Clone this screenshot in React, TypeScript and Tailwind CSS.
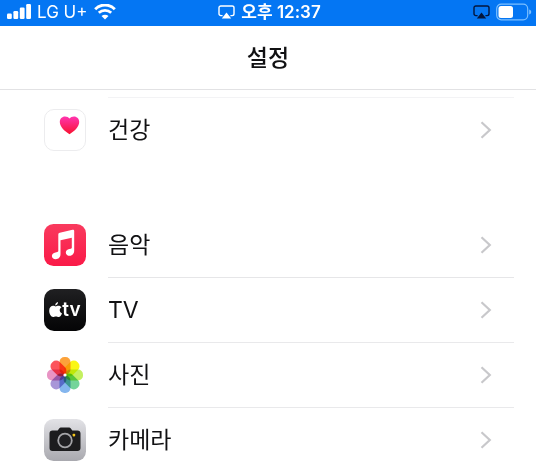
import type { ReactNode } from "react";

type Item = {
  label: string;
  icon: ReactNode;
  border: string;
};

const SignalIcon = () => (
  <svg className="h-4 w-6" viewBox="0 0 24 16" fill="#fff" aria-hidden="true">
    <rect x="0" y="9.5" width="4.8" height="5.5" rx="1.2" />
    <rect x="6.4" y="7" width="4.8" height="8" rx="1.2" />
    <rect x="12.8" y="3.5" width="4.8" height="11.5" rx="1.2" />
    <rect x="19.2" y="0" width="4.8" height="15" rx="1.2" />
  </svg>
);

const WifiIcon = () => (
  <svg className="h-4 w-[22px]" viewBox="0 0 22 16" fill="none" stroke="#fff" aria-hidden="true">
    <path d="M1.2 5.2C6.8-.3 15.2-.3 20.8 5.2" strokeWidth="3" />
    <path d="M4.8 8.8C8.4 5.5 13.6 5.5 17.2 8.8" strokeWidth="2.8" />
    <path d="M11 15.5 7.5 12c2-1.800 5-1.800 7 0Z" fill="#fff" stroke="none" />
  </svg>
);

const AirPlayIcon = ({ className }: { className: string }) => (
  <svg className={className} viewBox="0 0 17 14" fill="none" stroke="currentColor" aria-hidden="true">
    <path
      d="M4.6 10.6H2.8A1.8 1.8 0 0 1 1 8.8V2.8A1.8 1.8 0 0 1 2.8 1h11.4A1.8 1.8 0 0 1 16 2.8v6a1.8 1.8 0 0 1-1.8 1.8h-1.8"
      strokeWidth="1.4"
    />
    <path d="M8.5 7.5 13.2 13.4H3.8Z" fill="currentColor" stroke="none" />
  </svg>
);

const BatteryIcon = () => (
  <svg className="h-[18px] w-9" viewBox="0 0 36 18" aria-hidden="true">
    <rect x="0.7" y="1.2" width="31" height="15.6" rx="4.5" fill="none" stroke="#7cc0ff" strokeWidth="1.2" />
    <rect x="2.5" y="3" width="14.5" height="12" rx="2.5" fill="#fff" />
    <path d="M33.2 6.5c1.500.4 2 1.500 2 2.500s-.5 2.100-2 2.500Z" fill="#7cc0ff" />
  </svg>
);

const HealthIcon = () => (
  <svg className="size-[42px]" viewBox="0 0 42 42" aria-hidden="true">
    <defs>
      <linearGradient id="heart" x1="0" y1="0" x2="0" y2="1">
        <stop offset="0" stopColor="#ff35b0" />
        <stop offset="1" stopColor="#f8122f" />
      </linearGradient>
    </defs>
    <rect x="0.5" y="0.5" width="41" height="41" rx="9.5" fill="#fff" stroke="#ececee" />
    <path
      d="M25.500 25.200C21 22.300 15.800 18 15.800 13c0-3.200 2.200-5.500 5.200-5.500 2 0 3.500.8 4.500 2 1-1.200 2.500-2 4.500-2 3 0 5.200 2.300 5.200 5.500 0 5-5.200 9.300-9.700 12.200Z"
      fill="url(#heart)"
    />
  </svg>
);

const MusicIcon = () => (
  <svg className="size-[42px]" viewBox="0 0 42 42" aria-hidden="true">
    <defs>
      <linearGradient id="music" x1="0" y1="0" x2="0" y2="1">
        <stop offset="0" stopColor="#f93a5e" />
        <stop offset="1" stopColor="#fa1a48" />
      </linearGradient>
    </defs>
    <rect width="42" height="42" rx="9.5" fill="url(#music)" />
    <path
      d="M14.300 10.600c0-1 .5-1.600 1.500-1.800l12.700-3.100c1-.2 1.700.3 1.700 1.300v19.600c0 3.200-2 5.200-4.700 5.200-2.300 0-3.700-1.300-3.700-3.200s1.400-3.200 3.500-3.600l1.500-.3c.7-.2 1-.5 1-1.200v-9.800l-11.300 2.600v13.700c0 3.200-2 5.200-4.800 5.200-2.400 0-3.800-1.300-3.800-3.200s1.400-3.200 3.600-3.600l1.800-.4c.7-.2 1-.5 1-1.200Z"
      fill="#fff"
    />
  </svg>
);

const TvIcon = () => (
  <span className="flex size-[42px] items-center justify-center rounded-[10px] bg-linear-to-b from-[#202022] to-[#050506] text-white">
    <svg className="h-4 w-[13px]" viewBox="0 0 13 16" fill="currentColor" aria-hidden="true">
      <path d="M9 0c.1 1.900-1.100 3.300-2.800 3.400C6.100 1.700 7.400.3 9 0Z" />
      <path d="M6.700 4.400c.7 0 1.500-.7 2.900-.7 1.100 0 2.200.6 2.900 1.600-2.600 1.500-2.200 5 .5 6.100-.7 1.700-1.900 3.600-3.300 3.600-1.100 0-1.400-.6-2.800-.6s-1.800.6-2.800.6C2 15 .2 11.900.2 8.800c0-3.200 2-5 3.900-5 1.200 0 2 .6 2.600.6Z" />
    </svg>
    <span className="font-[Inter,sans-serif] text-[19px] leading-5 font-semibold">tv</span>
  </span>
);

const petals = [
  { color: "#fca23a", angle: 0 },
  { color: "#faf614", angle: 45 },
  { color: "#c4f060", angle: 90 },
  { color: "#74d49a", angle: 135 },
  { color: "#84b6ee", angle: 180 },
  { color: "#a896d8", angle: 225 },
  { color: "#e894c4", angle: 270 },
  { color: "#fc545c", angle: 315 },
];

const PhotosIcon = () => (
  <svg className="size-[42px]" viewBox="0 0 42 42" aria-hidden="true">
    {petals.map((petal) => (
      <rect
        key={petal.angle}
        x="15.5"
        y="3"
        width="11"
        height="17.5"
        rx="5"
        fill={petal.color}
        className="mix-blend-multiply"
        transform={`rotate(${petal.angle} 21 21)`}
      />
    ))}
    <circle cx="21" cy="21" r="1.6" fill="#fff" />
  </svg>
);

const CameraIcon = () => (
  <svg className="size-[42px]" viewBox="0 0 42 42" aria-hidden="true">
    <defs>
      <linearGradient id="camera" x1="0" y1="0" x2="0" y2="1">
        <stop offset="0" stopColor="#e2e2e6" />
        <stop offset="1" stopColor="#a9a9af" />
      </linearGradient>
    </defs>
    <rect width="42" height="42" rx="9.5" fill="url(#camera)" />
    <path
      d="M8.500 11.500h5.200l1.500-2c.6-.8 1.200-1 2-1h7.600c.8 0 1.400.2 2 1l1.500 2h5.200c1.900 0 3 1.100 3 3v14.500c0 1.900-1.100 3-3 3h-25c-1.900 0-3-1.100-3-3V14.500c0-1.900 1.100-3 3-3Z"
      fill="#1c1c1e"
    />
    <circle cx="21" cy="21.5" r="6.8" fill="#1f1f22" stroke="#a4a4a8" strokeWidth="1.8" />
    <rect x="28.6" y="14.8" width="2.6" height="2.6" rx="0.8" fill="#f4c51c" />
  </svg>
);

const Chevron = () => (
  <svg className="h-[18px] w-3" viewBox="0 0 12 18" fill="none" stroke="#c8c8cb" strokeWidth="2.2" aria-hidden="true">
    <path d="M1.5 1.2 9.800 9l-8.300 7.800" />
  </svg>
);

const groups: Item[][] = [
  [{ label: "건강", icon: <HealthIcon />, border: "border-[#f3f3f5]" }],
  [
    { label: "음악", icon: <MusicIcon />, border: "border-transparent" },
    { label: "TV", icon: <TvIcon />, border: "border-[#e6e6e8]" },
    { label: "사진", icon: <PhotosIcon />, border: "border-[#e9e9eb]" },
    { label: "카메라", icon: <CameraIcon />, border: "border-[#e9e9eb]" },
  ],
];

const SettingsRow = ({ label, icon, border }: Item) => (
  <li>
    <a href="#" className="flex h-[65px] items-center gap-[22px] pr-[22px] pl-11">
      {icon}
      <span className={`flex h-full flex-1 items-center justify-between border-t pr-[22px] ${border}`}>
        <span className="text-[23px] leading-[34px]">{label}</span>
        <Chevron />
      </span>
    </a>
  </li>
);

const StatusBar = () => (
  <div className="grid h-[26px] shrink-0 grid-cols-[1fr_auto_1fr] items-center bg-[#0476f3] pr-1 pb-1 pl-[7px] text-[17px] leading-6 text-white">
    <div className="flex items-center gap-[6px]">
      <SignalIcon />
      <span>LG U+</span>
      <WifiIcon />
    </div>
    <div className="flex items-center gap-[6px] font-semibold">
      <AirPlayIcon className="h-[14px] w-[17px]" />
      <span>오후 12:37</span>
    </div>
    <div className="flex items-center justify-end gap-[6px]">
      <AirPlayIcon className="h-[14px] w-[17px] text-[#04163c]" />
      <BatteryIcon />
    </div>
  </div>
);

const App = () => {
  return (
    <div className="flex h-screen flex-col overflow-hidden bg-white font-[Inter,'Noto_Sans_CJK_KR',sans-serif] text-[#111113]">
      <StatusBar />
      <header className="flex h-16 shrink-0 items-center justify-center border-b border-[#e2e2e4]">
        <h1 className="text-[23px] leading-8 font-medium">설정</h1>
      </header>
      <main className="flex flex-col gap-[50px] pt-[7px]">
        {groups.map((group, index) => (
          <ul key={index}>
            {group.map((item) => (
              <SettingsRow key={item.label} {...item} />
            ))}
          </ul>
        ))}
      </main>
    </div>
  );
};

export default App;
